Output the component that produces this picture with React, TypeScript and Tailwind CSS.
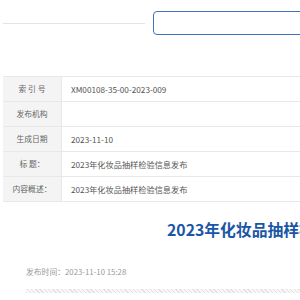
import React from "react";

const rows = [
  { label: "索 引 号", value: "XM00108-35-00-2023-009" },
  { label: "发布机构", value: "" },
  { label: "生成日期", value: "2023-11-10" },
  { label: "标 题：", value: "2023年化妆品抽样检验信息发布" },
  { label: "内容概述：", value: "2023年化妆品抽样检验信息发布" },
];

export default function App() {
  return (
    <div
      className="w-[300px] h-[300px] overflow-hidden bg-white"
      style={{ fontFamily: '"Noto Sans CJK SC", "Noto Sans", sans-serif' }}
    >
      <div className="w-[700px]">
        {/* header search */}
        <div className="flex items-center pt-[11px] pl-[3px]">
          <div className="w-[142px] h-px bg-[#e3e3e3]" />
          <div className="ml-[8px] w-[300px] h-[24px] rounded-[4px] border-[1.5px] border-[#3f73c2]" />
        </div>

        {/* info table */}
        <div className="mt-[41px] ml-[3px] border-t border-[#e8e8e8]">
          {rows.map((r) => (
            <div key={r.label} className="flex h-[25px] border-b border-[#e8e8e8]">
              <div className="w-[59px] shrink-0 bg-[#f4f4f4] border-r border-[#e8e8e8] flex items-center justify-center text-[7.8px] text-[#666]">
                {r.label}
              </div>
              <div className="pl-[9px] flex items-center text-[8.2px] text-[#555]">{r.value}</div>
            </div>
          ))}
        </div>

        {/* article title */}
        <div className="mt-[17px] pl-[167px] text-[15.8px] font-bold leading-[22px] text-[#1a56a6] whitespace-nowrap">
          2023年化妆品抽样检验信息发布
        </div>

        <div className="mt-[25px] pl-[26px] text-[7.8px] leading-[12px] text-[#999]">
          发布时间：2023-11-10 15:28
        </div>

        <div className="mt-[11px] ml-[26px] h-[4px] bg-[repeating-linear-gradient(45deg,#e2e2e2_0_1px,#f7f7f7_1px_3px)]" />
      </div>
    </div>
  );
}
